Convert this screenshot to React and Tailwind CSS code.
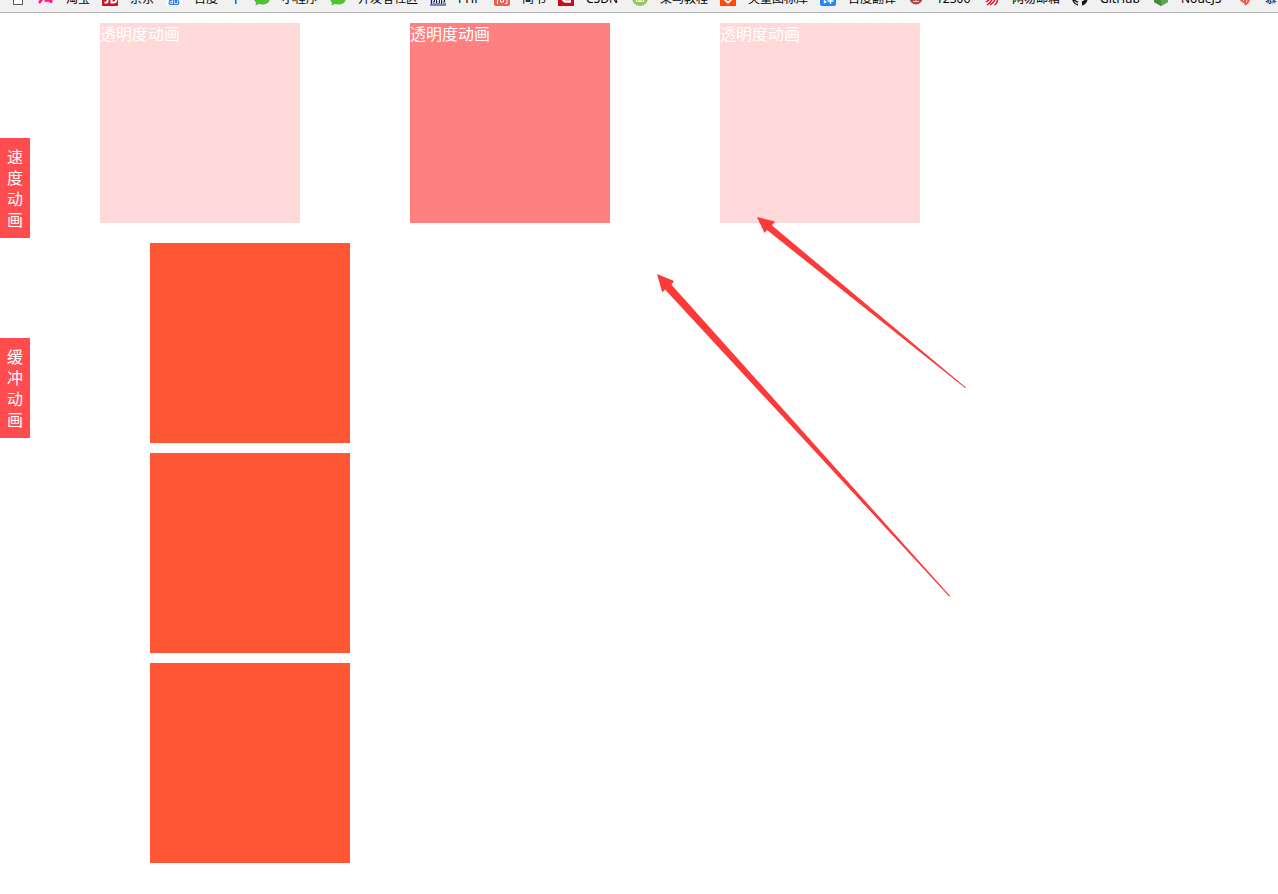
const ICONS = {
  page: <path d="M3.500 1.500h5l4 4v9h-9z" fill="#fff" stroke="#555" />,
  taobao: (
    <g fill="none" stroke="#ff1680" strokeWidth="2.600">
      <path d="M5 8 1 13M6.500 10.500h8M13 5v8" />
    </g>
  ),
  jd: (
    <g>
      <rect width="16" height="16" rx="1" fill="#c91623" />
      <path d="M5.500 5v6.500q0 1.500-3 1M9.500 5v7.500h2q3 0 3-4t-3-4z" fill="none" stroke="#fff" strokeWidth="2" />
    </g>
  ),
  baidu: (
    <g>
      <rect width="16" height="16" fill="#fff" />
      <path d="M8 5q5 4 5.500 8 0 2-2 2h-7q-2 0-2-2Q3 9 8 5z" fill="#2f7cf0" />
      <path d="M6.500 9v4.500h-1.500q-1 0-1-1t1-1h1.500M8.500 10.500v3h3v-3" fill="none" stroke="#fff" strokeWidth=".8" />
    </g>
  ),
  wechat: <path d="M8 1c4.500 0 8 3 8 7s-3 6.500-7.500 6.500c-1.500 0-2.500-.2-3.500-.5l-3.500 1.500.5-3C.7 11.500 0 10 0 8c0-4 3.500-7 8-7z" fill="#51c332" />,
  php: (
    <g>
      <rect width="16" height="16" fill="#8080c4" />
      <path d="M1.500 14V9h3v3h-2M6.500 6v7M6.500 9.500h3V13M11.500 14V9h3v3h-2" fill="none" stroke="#fff" strokeWidth="2.200" />
      <path d="M1.500 14V9h3v3h-2M6.500 6v7M6.500 9.500h3V13M11.500 14V9h3v3h-2" fill="none" stroke="#222244" />
    </g>
  ),
  jianshu: (
    <g>
      <rect width="16" height="16" rx="2" fill="#e8614d" />
      <path d="M3.500 14V5M6 5h7v8.500h-2M6.500 8h3v4h-3z" fill="none" stroke="#fff" />
    </g>
  ),
  csdn: (
    <g>
      <rect width="16" height="16" fill="#ca0c16" />
      <path d="M13 4.500H8.500Q5 4.500 5 8t3 3.500h5" fill="none" stroke="#fff" strokeWidth="2.600" />
    </g>
  ),
  runoob: (
    <g>
      <circle cx="8" cy="8" r="8" fill="#96c75d" />
      <path d="M4 8h8v4H4z" fill="#eef6e0" />
      <path d="M5 11l3-2 3 2" fill="none" stroke="#96c75d" />
    </g>
  ),
  iconfont: (
    <g>
      <rect width="16" height="16" fill="#ff4a0c" />
      <path d="M3 8l2-2h6l2 2v1.500l-5 4.500-5-4.500z" fill="#fff" />
      <path d="M6.500 9.500l1.500 1.500 1.500-1.500" fill="none" stroke="#ff4a0c" />
    </g>
  ),
  fanyi: (
    <g>
      <rect width="16" height="16" rx="2" fill="#1e88f5" />
      <path d="M4.500 6v6.500l2-1M7.500 8.500h6M7.500 11h6M10.500 5v9" fill="none" stroke="#fff" strokeWidth="1.400" />
    </g>
  ),
  railway: (
    <g>
      <circle cx="8" cy="8" r="6.500" fill="#a54848" />
      <path d="M5 11.500h6M8 6v5M6 9h4" fill="none" stroke="#e6c8c8" />
    </g>
  ),
  netease: (
    <path
      d="M4 3h8v4H4zM2 12l5-3.500h6.500q0 5-3 6.500M8 9.500q-1 3-5 5.500M11 9.500q-1 3-5 5.500"
      fill="none"
      stroke="#e60012"
      strokeWidth="1.300"
    />
  ),
  github: (
    <path
      d="M8 0a8 8 0 0 0-2.500 15.600c.4.1.5-.2.500-.4v-1.500c-2.200.5-2.700-1-2.700-1-.4-.9-.9-1.200-.9-1.200-.7-.5.1-.5.1-.5.8.1 1.200.8 1.200.8.7 1.200 1.900.9 2.300.7.100-.5.300-.9.500-1.100-1.800-.2-3.600-.9-3.600-4 0-.9.300-1.600.8-2.100-.1-.2-.4-1 .1-2.100 0 0 .7-.2 2.200.8a7.600 7.600 0 0 1 4 0c1.500-1 2.200-.8 2.200-.8.400 1.100.2 1.900.1 2.100.5.600.8 1.300.8 2.100 0 3.100-1.900 3.700-3.700 3.900.300.3.600.8.600 1.500v2.200c0 .2.100.5.600.4A8 8 0 0 0 8 0z"
      fill="#181818"
    />
  ),
  node: (
    <g>
      <path d="M8 0l7 4v8l-7 4-7-4V4z" fill="#539e43" />
      <path d="M8 9l7-5v8l-7 4z" fill="#5fa652" />
      <path d="M1 4l7 5v7l-7-4z" fill="#468c40" />
    </g>
  ),
  imooc: (
    <g fill="none" stroke="#f2554c" strokeWidth="2">
      <path d="M4 7q-1 4 3 5M12 6q1 6-4 9M8 14V9.500h4" />
    </g>
  ),
};

const BOOKMARKS = [
  { icon: 'page', text: '', width: '' },
  { icon: 'taobao', text: '淘宝', width: 'w-6' },
  { icon: 'jd', text: '京东', width: 'w-6' },
  { icon: 'baidu', text: '百度一下', width: 'w-12' },
  { icon: 'wechat', text: '小程序', width: 'w-9' },
  { icon: 'wechat', text: '开发者社区', width: 'w-[60px]' },
  { icon: 'php', text: 'PHP', width: 'w-6' },
  { icon: 'jianshu', text: '简书', width: 'w-6' },
  { icon: 'csdn', text: 'CSDN', width: 'w-[34px]' },
  { icon: 'runoob', text: '菜鸟教程', width: 'w-12' },
  { icon: 'iconfont', text: '矢量图标库', width: 'w-[60px]' },
  { icon: 'fanyi', text: '百度翻译', width: 'w-12' },
  { icon: 'railway', text: '12306', width: 'w-9' },
  { icon: 'netease', text: '网易邮箱', width: 'w-12' },
  { icon: 'github', text: 'GitHub', width: 'w-[41px]' },
  { icon: 'node', text: 'NodeJS', width: 'w-11' },
  { icon: 'imooc', text: '慕课网', width: 'w-9' },
];

function BookmarkBar() {
  return (
    <nav
      aria-label="Bookmarks"
      className="flex h-[13px] items-end gap-3 overflow-hidden border-b border-[#b0b0b0] bg-[#f1f1f1] pb-1.5 pl-2.5"
    >
      {BOOKMARKS.map(({ icon, text, width }, i) => (
        <a key={i} href="#" aria-label={text || 'Page'} className="flex shrink-0 items-end gap-3 text-xs leading-[14px] text-black">
          <svg viewBox="0 0 16 16" className="size-4 shrink-0" aria-hidden="true">
            {ICONS[icon]}
          </svg>
          {text && <span className={`whitespace-nowrap ${width}`}>{text}</span>}
        </a>
      ))}
    </nav>
  );
}

function SideTab({ children }) {
  return (
    <button type="button" className="w-[30px] bg-[#ff4d4f] px-[7px] pt-[9px] pb-[7px] text-base leading-[21px] break-all text-white">
      {children}
    </button>
  );
}

export default function App() {
  return (
    <div className="relative bg-white font-['Noto_Sans','Noto_Sans_CJK_SC',sans-serif]">
      <BookmarkBar />
      <div className="flex items-start gap-[70px]">
        <aside className="flex w-[30px] shrink-0 flex-col gap-[100px] pt-[125px]">
          <SideTab>速度动画</SideTab>
          <SideTab>缓冲动画</SideTab>
        </aside>
        <main className="pt-2.5">
          <section className="flex gap-[110px] text-base leading-[23px] text-white">
            <div className="size-[200px] shrink-0 bg-[#ffd9d9]">透明度动画</div>
            <div className="size-[200px] shrink-0 bg-[#ff8080]">透明度动画</div>
            <div className="size-[200px] shrink-0 bg-[#ffd9d9]">透明度动画</div>
          </section>
          <section className="mt-5 flex flex-col gap-2.5 pl-[50px]">
            <div className="size-[200px] bg-[#ff5733]" />
            <div className="size-[200px] bg-[#ff5733]" />
            <div className="size-[200px] bg-[#ff5733]" />
          </section>
        </main>
      </div>
      <svg
        viewBox="0 0 310 380"
        className="pointer-events-none absolute top-[217px] left-[657px] h-[380px] w-[310px]"
        fill="#fc3a3a"
        aria-hidden="true"
      >
        <path d="M100 0l18 4.500-3 4L309 170.500l-.6.800L110 13l-2.500 3z" />
        <path d="M0 57l17 7-2.500 3.800L293.200 379l-.8.700L8 72.500l-2.700 3z" />
      </svg>
    </div>
  );
}
